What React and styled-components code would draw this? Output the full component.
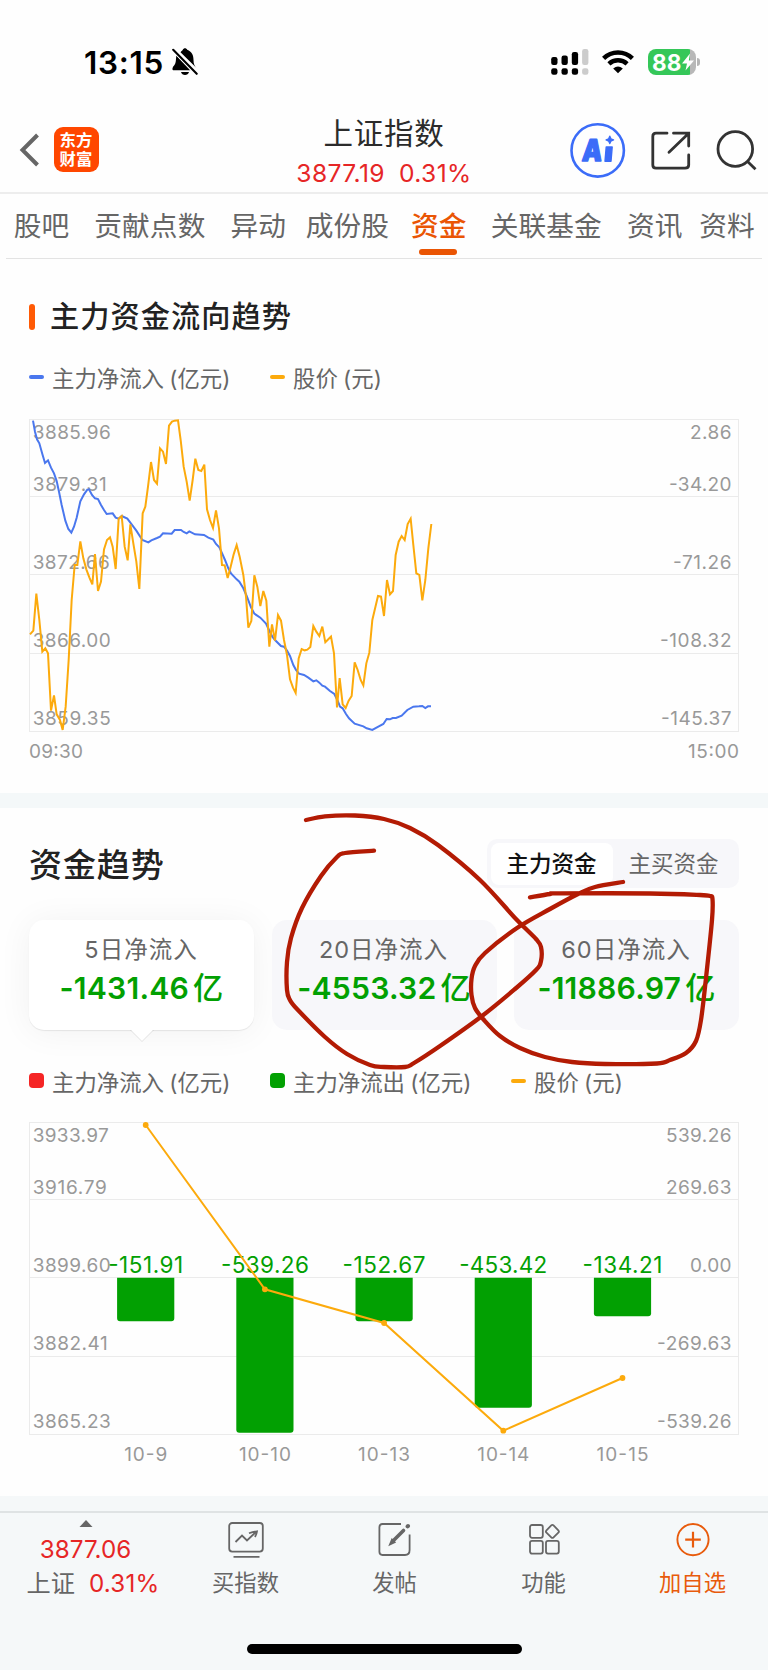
import React from "react";
import styled, { createGlobalStyle } from "styled-components";

const GlobalStyle = createGlobalStyle`
  * { box-sizing: border-box; }
  body { margin: 0; background: #fff; }
`;

const FONT = `Inter, "Noto Sans CJK SC", sans-serif`;
const GREEN = "#02a002";
const GOLD = "#fcaa0c";
const BLUE = "#4a77ee";

const Screen = styled.div`
  position: relative;
  width: 768px;
  height: 1670px;
  overflow: hidden;
  background: #fefefe;
  color: #666;
  font-family: ${FONT};
  white-space: nowrap;
`;

const StatusBar = styled.div`
  height: 104px;
  padding: 20px 68px 0 84px;
  display: flex;
  align-items: center;
  color: #000;
`;
const Clock = styled.span`
  font-size: 31.5px;
  font-weight: 600;
  letter-spacing: 0.7px;
  width: 88px;
`;
const StatusIcons = styled.div`
  margin-left: auto;
  display: flex;
  align-items: center;
`;
const Battery = styled.div`
  display: flex;
  align-items: center;
  margin-left: 14px;
`;
const BatteryBody = styled.div`
  width: 48px;
  height: 26px;
  border-radius: 8px;
  padding-left: 4px;
  display: flex;
  align-items: center;
  color: #fff;
  font-size: 22.5px;
  font-weight: 700;
  letter-spacing: 0.2px;
  background: linear-gradient(90deg, #35c759 42px, #b8b8b8 42px);
`;
const BatteryTip = styled.div`
  width: 3px;
  height: 8px;
  margin-left: 1px;
  border-radius: 0 4px 4px 0;
  background: #b5b5b5;
`;

const Header = styled.header`
  height: 90px;
  border-bottom: 2px solid #ededed;
  display: grid;
  grid-template-columns: 199px 1fr 199px;
`;
const HeaderLeft = styled.div`
  display: flex;
  align-items: center;
  padding: 2px 0 0 19px;
  gap: 13.5px;
`;
const AppLogo = styled.div`
  width: 45px;
  height: 45px;
  border-radius: 9px;
  background: #ff4700;
  color: #fff;
  font: 700 16.4px/19px "Noto Sans CJK SC", sans-serif;
  text-align: center;
  padding-top: 3px;
`;
const HeaderTitle = styled.div`
  display: flex;
  flex-direction: column;
  align-items: center;
  padding-top: 9px;
`;
const StockName = styled.div`
  font-size: 29.5px;
  line-height: 40px;
  letter-spacing: 0.7px;
  color: #2b2b2b;
`;
const StockQuote = styled.div`
  display: flex;
  gap: 14px;
  font-size: 24.6px;
  line-height: 40px;
  letter-spacing: 0.4px;
  color: #e62626;
`;
const HeaderRight = styled.div`
  display: flex;
  align-items: center;
  padding-top: 2px;
`;

const TabBar = styled.nav`
  height: 65px;
  margin: 0 6px;
  padding-left: 7.7px;
  border-bottom: 1px solid #e3e3e3;
  display: flex;
`;
const Tab = styled.div`
  position: relative;
  margin-left: ${(p) => p.$gap}px;
  font-size: 27.7px;
  line-height: 64px;
  letter-spacing: 0.1px;
  color: ${(p) => (p.$active ? "#ea5504" : "#666")};
  font-weight: ${(p) => (p.$active ? 500 : 400)};
  &::after {
    content: "";
    display: ${(p) => (p.$active ? "block" : "none")};
    position: absolute;
    left: 8.3px;
    bottom: 3px;
    width: 38px;
    height: 6px;
    border-radius: 3px;
    background: #ea5504;
  }
`;

const FlowSection = styled.section`
  height: 534px;
  padding: 38px 29px 0;
`;
const TrendSection = styled.section`
  height: 688px;
  padding: 30px 29px 0;
`;
const Divider = styled.div`
  height: 15px;
  background: #f4f8f9;
`;
const FlowTitle = styled.h2`
  margin: 0;
  height: 40px;
  display: flex;
  align-items: center;
  gap: 15px;
  font-size: 29.2px;
  line-height: 38px;
  font-weight: 500;
  letter-spacing: 1.05px;
  color: #222;
  padding-bottom: 1px;
  &::before {
    content: "";
    width: 6px;
    height: 26px;
    margin-top: 1px;
    border-radius: 3px;
    background: #ff5a05;
  }
`;
const TrendHead = styled.div`
  height: 50px;
  display: flex;
  align-items: center;
  justify-content: space-between;
`;
const TrendTitle = styled.h2`
  margin: 0;
  padding-bottom: 1px;
  font-size: 33px;
  font-weight: 500;
  letter-spacing: 0.9px;
  color: #222;
`;
const Segmented = styled.div`
  width: 252px;
  height: 49px;
  padding: 4px 4px 3px;
  border-radius: 10px;
  background: #f7f7fa;
  display: flex;
`;
const Segment = styled.div`
  width: 122px;
  padding-right: 1px;
  line-height: 42px;
  text-align: center;
  border-radius: 8px;
  font-size: 22.5px;
  background: ${(p) => (p.$active ? "#fff" : "none")};
  color: ${(p) => (p.$active ? "#111" : "#666")};
  font-weight: ${(p) => (p.$active ? 500 : 400)};
`;

const Legend = styled.div`
  height: 30px;
  margin-top: ${(p) => p.$top}px;
  display: flex;
`;
const LegendItem = styled.div`
  flex: 0 0 241px;
  display: flex;
  align-items: center;
  gap: 8px;
  font-size: 22.4px;
  word-spacing: -1px;
`;
const Swatch = styled.i`
  width: 15px;
  height: ${(p) => (p.$dash ? 4 : 15)}px;
  border-radius: ${(p) => (p.$dash ? 2 : 4)}px;
  background: ${(p) => p.$color};
`;

const Cards = styled.div`
  margin-top: 32px;
  display: grid;
  grid-template-columns: repeat(3, 225px);
  justify-content: space-between;
`;
const Card = styled.div`
  position: relative;
  height: 109.5px;
  padding-top: 13px;
  border-radius: 15px;
  text-align: center;
  background: ${(p) => (p.$active ? "#fff" : "#f7f7fa")};
  box-shadow: ${(p) => (p.$active ? "0 1px 1px #00000014, 0 2px 34px #0000000e" : "none")};
  &::after {
    content: "";
    display: ${(p) => (p.$active ? "block" : "none")};
    position: absolute;
    left: 101px;
    top: 109px;
    border: 12px solid transparent;
    border-top-color: #fff;
    border-bottom: 0;
    filter: drop-shadow(0 1px 0.5px #00000018);
  }
`;
const CardLabel = styled.div`
  font-size: 23.5px;
  line-height: 34px;
  letter-spacing: 1px;
  padding-right: 1px;
`;
const CardValue = styled.div`
  font-size: 30.2px;
  line-height: 42px;
  font-weight: 600;
  letter-spacing: 0.2px;
  color: ${GREEN};
`;
const Unit = styled.span`
  font-weight: 500;
  margin-left: 4px;
`;

const ChartSvg = styled.svg`
  display: block;
  margin-top: ${(p) => p.$top}px;
  overflow: visible;
  font-family: ${FONT};
  fill: #999;
  font-size: 19px;
`;

const Footer = styled.footer`
  height: 174px;
  padding-top: 15px;
  background: #f5f8f9;
`;
const FooterRow = styled.div`
  border-top: 2px solid #dfe3e4;
  height: 133px;
  display: grid;
  grid-template-columns: 171px repeat(4, 149px);
`;
const IndexCell = styled.div`
  padding-top: 7px;
  display: flex;
  flex-direction: column;
  align-items: center;
`;
const IndexLine = styled.div`
  display: flex;
  gap: 14px;
  margin-top: ${(p) => (p.$first ? 5.5 : 1)}px;
  padding-left: ${(p) => p.$shift || 0}px;
  font-size: 24.2px;
  line-height: 33px;
  color: ${(p) => p.$color || "#666"};
`;
const Red = styled.span`
  color: #e62626;
  letter-spacing: 0.2px;
`;
const Action = styled.div`
  display: flex;
  flex-direction: column;
  align-items: center;
  padding-top: 7.7px;
  font-size: 22.3px;
  line-height: 30px;
  gap: 9px;
  color: ${(p) => (p.$accent ? "#e85b0c" : "#666")};
`;
const HomeIndicator = styled.div`
  width: 275px;
  height: 10px;
  margin: 0 auto;
  border-radius: 5px;
  background: #000;
`;
const Ink = styled.svg`
  position: absolute;
  left: 0;
  top: 0;
  pointer-events: none;
`;

const TABS = [
  ["股吧", 0], ["贡献点数", 25], ["异动", 25], ["成份股", 19.7], ["资金", 22],
  ["关联基金", 24], ["资讯", 25.2], ["资料", 16.6],
];

const GRID = [0, 77, 155, 234, 312];
const BASELINES = [20, 71.5, 150, 228, 306.3];

const INFLOW =
  "99,-298 105,-265 111,-242 118,-230 127,-198 135,-171 144,-179 153,-157 162,-140 170,-117 177,-85 185,-45 196,2 205,27 214,38 222,20 230,-7 241,-56 252,-77 262,-91 267,-92 276,-75 285,-65 294,-63 303,-45 312,-30 320,-18 338,-20 347,-7 356,-4 365,-12 382,-4 391,8 409,32 427,60 445,67 454,61 471,54 480,50 489,40 515,41 524,30 543,30 551,36 560,40 568,34 585,43 612,45 625,53 640,59 648,72 658,82 665,97 675,120 685,145 693,160 710,178 718,185 730,205 740,228 753,262 763,281 781,293 798,311 807,330 817,350 825,360 843,378 852,380 861,392 870,408 880,435 888,450 897,461 912,465 925,473 940,484 949,481 958,488 967,497 975,500 990,513 1003,522 1012,540 1020,560 1028,565 1038,582 1047,595 1064,611 1090,619 1100,625 1117,630 1135,620 1150,612 1160,597 1170,598 1178,594 1188,594 1205,587 1222,570 1240,560 1257,559 1267,558 1276,564 1284,559 1293,559";
const PRICE =
  "90,343 100,332 109,221 118,300 127,395 136,385 144,400 153,572 162,526 170,583 180,600 188,630 197,560 206,420 215,240 224,135 232,135 241,64 250,115 259,148 268,172 277,193 285,102 294,213 303,185 312,88 321,60 330,52 338,80 347,147 356,-4 365,-12 374,80 383,121 391,13 400,70 409,125 418,207 428,-20 436,-40 444,-100 453,-174 462,-120 471,-109 480,-215 489,-205 498,-168 507,-283 516,-295 524,-298 534,-299 542,-240 551,-160 560,-115 569,-58 578,-120 586,-184 595,-150 604,-147 613,-166 621,-32 630,0 639,24 648,-29 657,25 666,135 674,136 683,174 692,140 701,103 710,75 719,110 730,165 738,230 745,323 754,303 763,166 772,200 781,258 790,213 799,242 808,380 816,313 825,362 834,285 843,302 852,360 861,405 870,478 879,503 887,519 896,415 905,387 914,391 922,389 931,381 940,318 949,335 958,348 967,320 976,367 985,358 993,350 1002,400 1011,562 1019,474 1028,553 1037,564 1046,542 1055,528 1064,427 1073,450 1082,480 1090,496 1099,430 1108,398 1117,300 1126,262 1134,228 1143,230 1152,288 1161,180 1170,223 1179,213 1187,105 1196,65 1205,48 1214,60 1223,12 1232,-4 1240,75 1249,160 1258,165 1267,241 1276,180 1285,85 1294,12";

const DAYS = [
  { date: "10-9", dw: 43, value: "-151.91", w: 75, h: 43.5, y: 3 },
  { date: "10-10", dw: 52, value: "-539.26", w: 88, h: 155, y: 167.3 },
  { date: "10-13", dw: 52, value: "-152.67", w: 83, h: 43.5, y: 201 },
  { date: "10-14", dw: 52, value: "-453.42", w: 88, h: 130, y: 308.7 },
  { date: "10-15", dw: 52, value: "-134.21", w: 80, h: 38.5, y: 256 },
];
const dayX = (i) => 116.7 + i * 119.2;

/* Smooth curve through a list of hand-drawn points. */
function smooth(pts) {
  let d = `M${pts[0]}`;
  for (let i = 0; i < pts.length - 1; i++) {
    const a = pts[i - 1] || pts[i];
    const b = pts[i];
    const c = pts[i + 1];
    const e = pts[i + 2] || c;
    d += `C${b[0] + (c[0] - a[0]) / 6},${b[1] + (c[1] - a[1]) / 6} ${c[0] - (e[0] - b[0]) / 6},${c[1] - (e[1] - b[1]) / 6} ${c}`;
  }
  return d;
}
const LOOP_A = [[306, 820], [325, 816.3], [355, 815.5], [384, 819], [410, 828], [438, 845], [480, 880], [516, 919], [536, 939], [541, 947], [541, 961], [536, 970], [515, 989], [482, 1016], [440, 1046], [414, 1063], [405, 1067], [384, 1067], [370, 1065], [347, 1054], [325, 1037], [297, 1009], [290, 1000], [287, 990], [287, 962], [291, 938], [302, 908], [321, 876], [337, 857], [345, 853], [374, 850.7]];
const LOOP_B = [[623, 882], [595, 887], [578, 894], [550, 909], [517, 928], [485, 953], [475, 966], [471.5, 979], [471.5, 995], [475, 1008], [484, 1020], [500, 1036], [520, 1048], [545, 1057], [572, 1062], [605, 1064], [657, 1063.5], [670, 1060], [686, 1053], [696, 1041], [701, 1020], [706, 978], [712, 920], [712.5, 899], [710, 896], [700, 895], [650, 893.5], [560, 893.3], [550, 894], [530, 897.3]];

function ChartFrame({ left, right, lw, rw }) {
  return (
    <g>
      {GRID.map((y) => <path key={y} d={`M0 ${y + 0.5}H710`} stroke="#ebebeb" />)}
      <path d="M.5 0V312M709.5 0V312" stroke="#ebebeb" />
      {left.map((t, i) => <text key={t} x="3.7" y={BASELINES[i]} textLength={lw[i] + 1}>{t}</text>)}
      {right.map((t, i) => (
        <text key={t} x={702 - rw[i]} y={BASELINES[i]} textLength={rw[i] + 0.5}>{t}</text>
      ))}
    </g>
  );
}

function FlowChart() {
  return (
    <ChartSvg $top={27} width="710" height="345">
      <ChartFrame
        left={["3885.96", "3879.31", "3872.66", "3866.00", "3859.35"]} lw={[77, 73, 76, 77, 77]}
        right={["2.86", "-34.20", "-71.26", "-108.32", "-145.37"]} rw={[41, 62, 58, 71, 70]}
      />
      <g transform="scale(.33333) translate(-87 303)" fill="none" strokeWidth="6" strokeLinejoin="miter">
        <polyline points={INFLOW} stroke={BLUE} />
        <polyline points={PRICE} stroke={GOLD} />
      </g>
      <text x="0" y="339" textLength="54">09:30</text>
      <text x="659" y="339" textLength="51">15:00</text>
    </ChartSvg>
  );
}

function TrendChart() {
  return (
    <ChartSvg $top={26.5} width="710" height="345">
      <ChartFrame
        left={["3933.97", "3916.79", "3899.60", "3882.41", "3865.23"]} lw={[75, 73, 77, 74, 77]}
        right={["539.26", "269.63", "0.00", "-269.63", "-539.26"]} rw={[65, 65, 41, 74, 74]}
      />
      {DAYS.map((d, i) => (
        <g key={d.date}>
          <path
            d={`M${dayX(i) - 28.6} 155.7h57.2v${d.h - 3}q0 3 -3 3h-51.2q-3 0 -3 -3z`}
            fill={GREEN}
          />
          <text x={dayX(i) - d.w / 2} y="150.6" textLength={d.w} fontSize="22.5" fill={GREEN}>{d.value}</text>
          <text x={dayX(i) - d.dw / 2} y="338.5" textLength={d.dw}>{d.date}</text>
        </g>
      ))}
      <polyline points={DAYS.map((d, i) => `${dayX(i)},${d.y}`).join(" ")} fill="none" stroke={GOLD} strokeWidth="2" />
      {DAYS.map((d, i) => <circle key={d.date} cx={dayX(i)} cy={d.y} r="2.9" fill={GOLD} />)}
    </ChartSvg>
  );
}

const BellOff = () => (
  <svg width="26" height="28" viewBox="0 0 26 28" fill="#000">
    <path d="M8.5 4.2C9.7 3 10.5 2.5 10.8 1.8C11.7-.2 14.3-.2 15.2 1.8C19.8 3.6 21.5 7.2 21.5 12C21.5 16 22.5 18 24.5 20z" />
    <path d="M4.4 7.6C3.7 12 4.3 15 2.1 17.5C.2 19.6-.4 22.3 2 22.3H18.5z" />
    <path d="M9 24h8c-.8 4-7.2 4-8 0z" />
    <path d="M1.5 1.5L25 26" stroke="#fff" strokeWidth="4.6" />
    <path d="M1.2 1.8L24.7 25.8" stroke="#000" strokeWidth="2.1" strokeLinecap="round" />
  </svg>
);
const Signal = () => (
  <svg width="38" height="26" viewBox="0 0 38 26">
    {[[8, 8], [6.5, 9.5], [3, 13], [0, 16]].map(([y, h], i) => (
      <g key={i} fill={i === 3 ? "#ccc" : "#000"}>
        <rect x={i * 10.3 + 0.2} y={y} width="6.3" height={h} rx="2.2" />
        <rect x={i * 10.3 + 0.2} y="19.2" width="6.3" height="6.6" rx="2.2" />
      </g>
    ))}
  </svg>
);
const Wifi = () => (
  <svg width="32" height="24" viewBox="0 0 32 24" fill="none" stroke="#000" strokeWidth="4.4">
    <path d="M1.6 8.4C9.5 .5 22.5 .5 30.4 8.4" />
    <path d="M6.9 13.9C12 9.1 20 9.1 25.1 13.9" />
    <path d="M11.2 18.4Q16 14.4 20.8 18.4L16 23.2z" fill="#000" stroke="none" />
  </svg>
);

export default function App() {
  return (
    <Screen>
      <GlobalStyle />
      <StatusBar>
        <Clock>13:15</Clock>
        <BellOff />
        <StatusIcons>
          <Signal />
          <svg width="13" height="1" />
          <Wifi />
          <Battery>
            <BatteryBody>
              88
              <svg width="12" height="18" viewBox="0 0 12 18"><path d="M8 .5L0 10.5H5L3.5 17.5L12 7.5H6.8z" fill="#fff" /></svg>
            </BatteryBody>
            <BatteryTip />
          </Battery>
        </StatusIcons>
      </StatusBar>

      <Header>
        <HeaderLeft>
          <svg width="21" height="34" viewBox="0 0 21 34" fill="none" stroke="#666" strokeWidth="4"><path d="M18.5 2L3.5 17L18.5 32" /></svg>
          <AppLogo>东方<br />财富</AppLogo>
        </HeaderLeft>
        <HeaderTitle>
          <StockName>上证指数</StockName>
          <StockQuote><span>3877.19</span><span>0.31%</span></StockQuote>
        </HeaderTitle>
        <HeaderRight>
          <svg width="199" height="60" viewBox="569 119 199 60" fill="none" stroke="#333" strokeWidth="2.8">
            <circle cx="597.7" cy="149.4" r="26.2" stroke="#3b6cf8" strokeWidth="2.6" />
            <g fill="#3b6cf8" stroke="#3b6cf8" strokeWidth="1.4" strokeLinejoin="round">
              <text x="583" y="160" fontSize="30" fontWeight="900" fontFamily="Inter" transform="translate(12.5 0) skewX(-5)" textLength="20" lengthAdjust="spacingAndGlyphs">A</text>
              <path d="M606.2 146h6l-1.2 14.2h-6z" />
              <path d="M609.8 135.2l1.1 2.6l2.6 1.1l-2.6 1.1l-1.1 2.6l-1.1-2.6l-2.6-1.1l2.6-1.1z" />
            </g>
            <path d="M667 132.2H656Q652.8 132.2 652.8 135.4V164Q652.8 167.2 656 167.2H685Q688.7 167.2 688.7 164V154" strokeLinecap="round" />
            <path d="M673.5 132.2H688.7V145M688.2 132.7L669 151.2" strokeLinecap="round" />
            <circle cx="735.3" cy="148" r="17.3" />
            <path d="M747.3 160.3L755.5 168.3" />
          </svg>
        </HeaderRight>
      </Header>

      <TabBar>
        {TABS.map(([name, gap]) => <Tab key={name} $gap={gap} $active={name === "资金"}>{name}</Tab>)}
      </TabBar>

      <FlowSection>
        <FlowTitle>主力资金流向趋势</FlowTitle>
        <Legend $top={25}>
          <LegendItem><Swatch $dash $color={BLUE} />主力净流入 (亿元)</LegendItem>
          <LegendItem><Swatch $dash $color={GOLD} />股价 (元)</LegendItem>
        </Legend>
        <FlowChart />
      </FlowSection>
      <Divider />

      <TrendSection>
        <TrendHead>
          <TrendTitle>资金趋势</TrendTitle>
          <Segmented>
            <Segment $active>主力资金</Segment>
            <Segment>主买资金</Segment>
          </Segmented>
        </TrendHead>
        <Cards>
          <Card $active>
            <CardLabel>5日净流入</CardLabel>
            <CardValue>-1431.46<Unit>亿</Unit></CardValue>
          </Card>
          <Card>
            <CardLabel>20日净流入</CardLabel>
            <CardValue>-4553.32<Unit>亿</Unit></CardValue>
          </Card>
          <Card>
            <CardLabel>60日净流入</CardLabel>
            <CardValue>-11886.97<Unit>亿</Unit></CardValue>
          </Card>
        </Cards>
        <Legend $top={36}>
          <LegendItem><Swatch $color="#f52525" />主力净流入 (亿元)</LegendItem>
          <LegendItem><Swatch $color={GREEN} />主力净流出 (亿元)</LegendItem>
          <LegendItem><Swatch $dash $color={GOLD} />股价 (元)</LegendItem>
        </Legend>
        <TrendChart />
      </TrendSection>

      <Footer>
        <FooterRow>
          <IndexCell>
            <svg width="14" height="7"><path d="M7 0L13.5 7H.5z" fill="#666" /></svg>
            <IndexLine $first $color="#e62626">3877.06</IndexLine>
            <IndexLine $shift={15}>上证<Red>0.31%</Red></IndexLine>
          </IndexCell>
          <Action>
            <svg width="36" height="38" viewBox="0 0 36 38" fill="none" stroke="#666" strokeWidth="1.8">
              <rect x="1.2" y="2" width="33.6" height="28.6" rx="3" />
              <path d="M7.5 21L14 14.5L19 19.5L28.5 10.5M21 12.3Q25 10.5 29 10.3Q28.6 13 27 16M5.5 35.8H31.5" />
            </svg>
            买指数
          </Action>
          <Action>
            <svg width="36" height="38" viewBox="0 0 36 38" fill="none" stroke="#666" strokeWidth="1.8">
              <path d="M24 3H5.5Q2.4 3 2.4 6.2V30.8Q2.4 34 5.5 34H28Q32.6 34 32.6 29V13.5" />
              <path d="M26.5 9.5L16 20" strokeWidth="3.6" strokeLinecap="round" />
              <path d="M30.6 5.4L31 5" strokeWidth="4" strokeLinecap="round" />
              <path d="M13 23.4L15 18.6L17.6 21.2z" fill="#666" />
            </svg>
            发帖
          </Action>
          <Action>
            <svg width="36" height="38" viewBox="0 0 36 38" fill="none" stroke="#666" strokeWidth="1.8">
              <rect x="4" y="4" width="12.8" height="12.8" rx="2" />
              <rect x="4" y="19.8" width="12.8" height="12.8" rx="2" />
              <rect x="20" y="19.8" width="12.8" height="12.8" rx="2" />
              <rect x="21.4" y="5.4" width="10" height="10" rx="1.6" transform="rotate(45 26.4 10.4)" />
            </svg>
            功能
          </Action>
          <Action $accent>
            <svg width="36" height="38" viewBox="0 0 36 38" fill="none" stroke="#e85b0c" strokeWidth="1.9">
              <circle cx="18" cy="18.6" r="15.6" />
              <path d="M18 10.8V26.4M10.2 18.6H25.8" strokeWidth="2.2" />
            </svg>
            加自选
          </Action>
        </FooterRow>
        <HomeIndicator />
      </Footer>

      <Ink width="768" height="1670" fill="none" stroke="#b31b04" strokeWidth="4.3" strokeLinecap="round" strokeLinejoin="round">
        <path d={smooth(LOOP_A)} />
        <path d={smooth(LOOP_B)} />
      </Ink>
    </Screen>
  );
}
